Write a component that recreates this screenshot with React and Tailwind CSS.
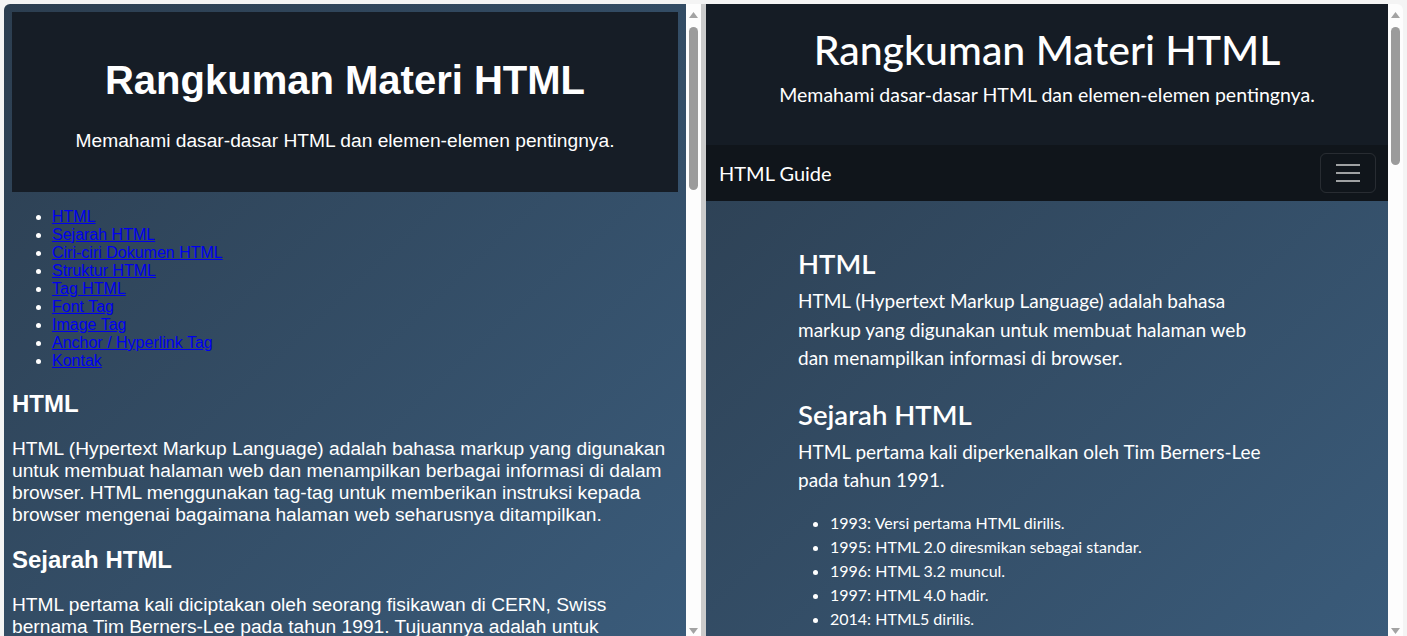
import React from "react";

const leftLinks = [
  "HTML",
  "Sejarah HTML",
  "Ciri-ciri Dokumen HTML",
  "Struktur HTML",
  "Tag HTML",
  "Font Tag",
  "Image Tag",
  "Anchor / Hyperlink Tag",
  "Kontak",
];

const timeline = [
  "1993: Versi pertama HTML dirilis.",
  "1995: HTML 2.0 diresmikan sebagai standar.",
  "1996: HTML 3.2 muncul.",
  "1997: HTML 4.0 hadir.",
  "2014: HTML5 dirilis.",
  "Sekarang: HTML Living Standard.",
];

function Arrow({ down }) {
  return (
    <svg width="9" height="6" viewBox="0 0 9 6" className="shrink-0">
      {down ? (
        <polygon points="0,0 9,0 4.5,6" fill="#a3a3a3" />
      ) : (
        <polygon points="4.5,0 9,6 0,6" fill="#a3a3a3" />
      )}
    </svg>
  );
}

function Scrollbar({ thumb }) {
  return (
    <div className="flex w-[15px] shrink-0 flex-col items-center bg-[#fdfdfd] pt-[8px] pb-[2px]">
      <Arrow />
      <div className={`mt-[9px] w-[9px] rounded-full bg-[#9b9b9b] ${thumb}`} />
      <div className="flex-1" />
      <Arrow down />
    </div>
  );
}

function LeftFrame() {
  return (
    <div className="flex h-full w-[697px] shrink-0 overflow-hidden rounded-tl-[6px]">
      <div
        className="flex-1 overflow-hidden bg-linear-to-br from-[#2c3e50] to-[#3a5b7a] p-2 text-white"
        style={{ fontFamily: '"Liberation Sans", Arial, sans-serif' }}
      >
        <header className="bg-[#161d26] px-5 pt-5 pb-5 text-center">
          <h1 className="mt-[25px] text-[40px] leading-[46px] font-bold">
            Rangkuman Materi HTML
          </h1>
          <p className="mt-[27px] mb-[20px] text-[19.2px] leading-[22px]">
            Memahami dasar-dasar HTML dan elemen-elemen pentingnya.
          </p>
        </header>

        <ul className="mt-[16px] list-disc pl-10 text-[16px] leading-[18px]">
          {leftLinks.map((l) => (
            <li key={l}>
              <a href="#" className="text-[#0000ee] underline">
                {l}
              </a>
            </li>
          ))}
        </ul>

        <h2 className="mt-[20px] text-[24px] leading-[28px] font-bold">HTML</h2>
        <p className="mt-[20px] text-[19.2px] leading-[22px]">
          HTML (Hypertext Markup Language) adalah bahasa markup yang digunakan
          untuk membuat halaman web dan menampilkan berbagai informasi di dalam
          browser. HTML menggunakan tag-tag untuk memberikan instruksi kepada
          browser mengenai bagaimana halaman web seharusnya ditampilkan.
        </p>

        <h2 className="mt-[20px] text-[24px] leading-[28px] font-bold">
          Sejarah HTML
        </h2>
        <p className="mt-[20px] text-[19.2px] leading-[22px]">
          HTML pertama kali diciptakan oleh seorang fisikawan di CERN, Swiss
          bernama Tim Berners-Lee pada tahun 1991. Tujuannya adalah untuk
          memudahkan para peneliti berbagi dokumen melalui jaringan internet.
        </p>
      </div>
      <Scrollbar thumb="h-[163px]" />
    </div>
  );
}

function RightFrame() {
  return (
    <div className="flex h-full flex-1 overflow-hidden rounded-tr-[6px]">
      <div
        className="flex-1 overflow-hidden bg-linear-to-br from-[#2c3e50] to-[#3a5b7a] text-white"
        style={{ fontFamily: 'Lato, "Noto Sans", sans-serif' }}
      >
        <header className="bg-[#151c25] pt-[22px] pb-[35px] text-center">
          <h1 className="text-[41px] leading-[48px] font-medium">
            Rangkuman Materi HTML
          </h1>
          <p className="mt-[6px] text-[19.5px] leading-[30px]">
            Memahami dasar-dasar HTML dan elemen-elemen pentingnya.
          </p>
        </header>

        <nav className="flex h-[56px] items-center justify-between bg-[#10151b] pr-3 pl-[13px]">
          <span className="text-[20px]">HTML Guide</span>
          <button className="flex h-[40px] w-[56px] flex-col items-center justify-center gap-[6px] rounded-md border border-white/10">
            <span className="h-[2px] w-[24px] bg-white/60" />
            <span className="h-[2px] w-[24px] bg-white/60" />
            <span className="h-[2px] w-[24px] bg-white/60" />
          </button>
        </nav>

        <main className="pt-[46px] pl-[92px]">
          <div className="w-[480px]">
            <section>
              <h2 className="text-[27.5px] leading-[33px] font-semibold">HTML</h2>
              <p className="mt-[7px] text-[19px] leading-[28.5px]">
                HTML (Hypertext Markup Language) adalah bahasa markup yang
                digunakan untuk membuat halaman web dan menampilkan informasi di
                browser.
              </p>
            </section>

            <section className="mt-[25px]">
              <h2 className="text-[27.5px] leading-[33px] font-semibold">
                Sejarah HTML
              </h2>
              <p className="mt-[7px] text-[19px] leading-[28.5px]">
                HTML pertama kali diperkenalkan oleh Tim Berners-Lee pada tahun
                1991.
              </p>
              <ul className="mt-[16px] list-disc pl-8 text-[16px] leading-[24px]">
                {timeline.map((t) => (
                  <li key={t}>{t}</li>
                ))}
              </ul>
            </section>
          </div>
        </main>
      </div>
      <Scrollbar thumb="h-[138px]" />
    </div>
  );
}

export default function App() {
  return (
    <div className="flex h-[636px] w-[1407px] overflow-hidden bg-[#f4f4f4] pt-1 pr-1 pl-1">
      <LeftFrame />
      <div className="w-[5px] shrink-0 bg-[#cbcbcb]" />
      <RightFrame />
    </div>
  );
}
